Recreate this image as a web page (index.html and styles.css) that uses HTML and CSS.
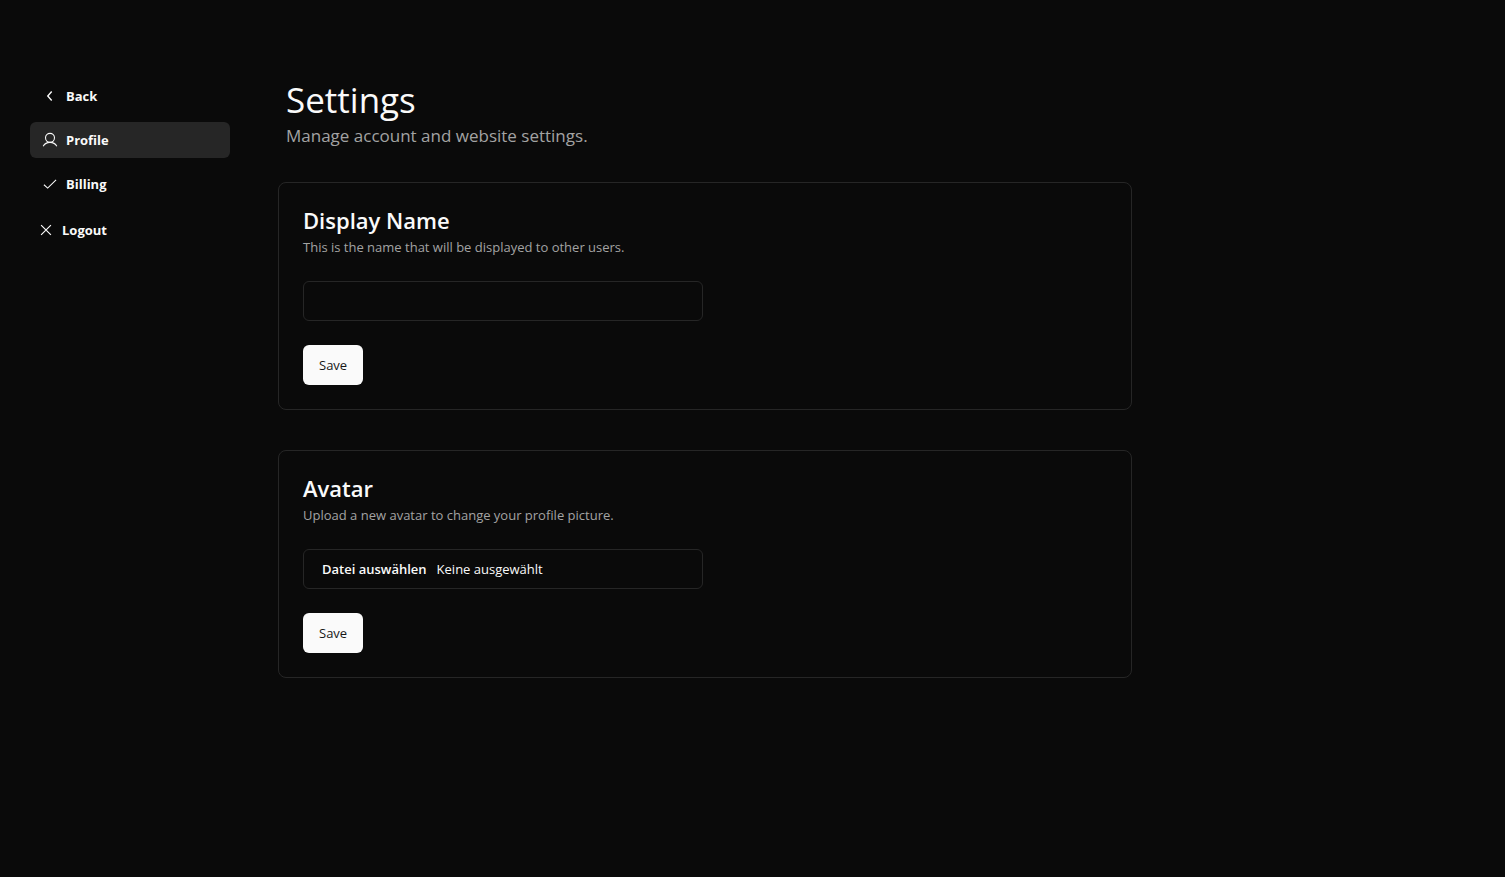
FILE: index.html
```html
<!DOCTYPE html>
<html lang="en">
<head>
<meta charset="utf-8">
<meta name="viewport" content="width=device-width, initial-scale=1">
<title>Settings</title>
<link rel="stylesheet" href="styles.css">
</head>
<body>
<div class="layout">
  <nav class="sidebar" aria-label="Settings">
    <a class="nav-link" href="#back">
      <svg class="icon" viewBox="0 0 15 15"><path d="M9.1 3.3 5.4 7.5l3.7 4.2" stroke-width="1.3"/></svg>
      Back
    </a>
    <a class="nav-link active" href="#profile" aria-current="page">
      <svg class="icon" viewBox="0 0 15 15"><circle cx="7.5" cy="5.5" r="4.2"/><path d="M1.1 13.3C2.5 10.8 4.8 9.7 7.5 9.7s5 1.1 6.4 3.6"/></svg>
      Profile
    </a>
    <a class="nav-link" href="#billing">
      <svg class="icon" viewBox="0 0 15 15"><path d="M1.8 8.2 5.3 11.3 13.2 3.7"/></svg>
      Billing
    </a>
    <button class="logout" type="button">
      <svg class="icon" viewBox="0 0 15 15"><path d="M2.9 2.9l9.2 9.2M12.1 2.9l-9.2 9.2" stroke-width="1.1"/></svg>
      Logout
    </button>
  </nav>
  <main class="main">
    <header class="page-header">
      <h1 class="page-title">Settings</h1>
      <p class="page-subtitle">Manage account and website settings.</p>
    </header>
    <form class="card">
      <div>
        <h2 class="card-title"><label for="display-name">Display Name</label></h2>
        <p class="card-text">This is the name that will be displayed to other users.</p>
      </div>
      <input class="field" id="display-name" type="text">
      <button class="save" type="button">Save</button>
    </form>
    <form class="card">
      <div>
        <h2 class="card-title">Avatar</h2>
        <p class="card-text">Upload a new avatar to change your profile picture.</p>
      </div>
      <label class="field file-field">
        <input class="file-input" type="file" accept="image/*">
        <span class="file-button">Datei auswählen</span>
        <span>Keine ausgewählt</span>
      </label>
      <button class="save" type="button">Save</button>
    </form>
  </main>
</div>
</body>
</html>
```
FILE: styles.css
```css
* {
  box-sizing: border-box;
}

body {
  margin: 0;
  background: #0a0a0a;
  color: #fafafa;
  font: 13px/20px "Segoe UI", "Open Sans", "Noto Sans", sans-serif;
}

h1, h2, p {
  margin: 0;
}

button, input {
  font: inherit;
  color: inherit;
}

.layout {
  display: flex;
  gap: 48px;
  padding: 78px 30px;
}

.sidebar {
  display: flex;
  flex: 0 0 200px;
  flex-direction: column;
  gap: 8px;
}

.nav-link, .logout {
  display: flex;
  align-items: center;
  gap: 8px;
  border: 0;
  border-radius: 6px;
  background: none;
  font-weight: 700;
  text-decoration: none;
  color: #fafafa;
}

.nav-link {
  padding: 8px 12px;
}

.logout {
  align-self: flex-start;
  padding: 10px 8px;
  cursor: pointer;
}

.active {
  background: #262626;
}

.icon {
  width: 16px;
  height: 16px;
  fill: none;
  stroke: currentColor;
  stroke-width: 1;
}

.main {
  flex: 1;
  max-width: 854px;
}

.page-header {
  padding: 0 8px;
  margin-bottom: 32px;
}

.page-title {
  font-size: 35px;
  line-height: 44px;
  font-weight: 400;
}

.page-subtitle {
  font-size: 17px;
  line-height: 28px;
  color: #a3a3a3;
}

.card {
  display: flex;
  flex-direction: column;
  align-items: flex-start;
  gap: 24px;
  padding: 24px;
  border: 1px solid #262626;
  border-radius: 8px;
}

.card + .card {
  margin-top: 40px;
}

.card-title {
  margin-bottom: 4px;
  font-size: 22px;
  line-height: 26px;
  font-weight: 600;
}

.card-text {
  color: #a3a3a3;
}

.field {
  width: 100%;
  max-width: 400px;
  height: 40px;
  padding: 8px 12px;
  border: 1px solid #262626;
  border-radius: 6px;
  background: transparent;
}

.file-field {
  display: flex;
  align-items: center;
  gap: 10px;
  padding: 8px 18px;
  cursor: pointer;
}

.file-input {
  position: absolute;
  width: 1px;
  height: 1px;
  opacity: 0;
}

.file-button {
  font-weight: 600;
}

.save {
  padding: 10px 16px;
  border: 0;
  border-radius: 6px;
  background: #fafafa;
  color: #171717;
  font-weight: 500;
  cursor: pointer;
}
```
